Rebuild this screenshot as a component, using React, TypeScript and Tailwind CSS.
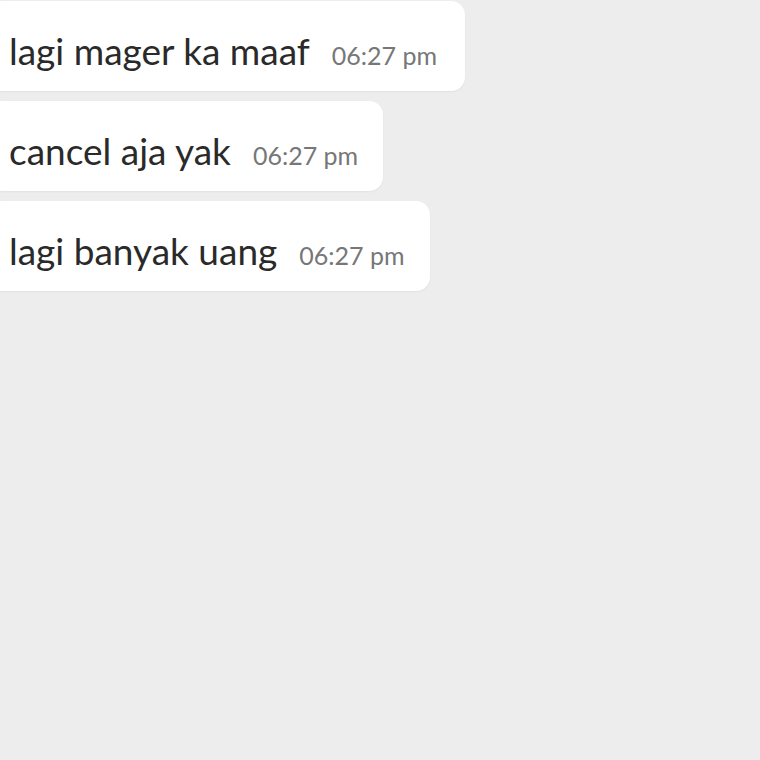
import React from "react";

const msgs = [
  { text: "lagi mager ka maaf", w: "w-[477px]" },
  { text: "cancel aja yak", w: "w-[395px]" },
  { text: "lagi banyak uang", w: "w-[442px]" },
];

export default function App() {
  return (
    <div className="w-[760px] h-[760px] bg-[#ededed] overflow-hidden pt-[1px] flex flex-col gap-[10px]" style={{ fontFamily: 'Lato, sans-serif' }}>
      {msgs.map((m, i) => (
        <div
          key={i}
          className={`-ml-[12px] h-[90px] ${m.w} shrink-0 bg-white rounded-[14px] shadow-[0_1px_2px_rgba(0,0,0,0.05)] flex items-baseline pl-[21px] pt-[31px]`}
        >
          <span className="text-[37px] text-[#2a2a2a] leading-none">{m.text}</span>
          <span className="ml-[22px] text-[25px] text-[#777777] leading-none">06:27 pm</span>
        </div>
      ))}
    </div>
  );
}
